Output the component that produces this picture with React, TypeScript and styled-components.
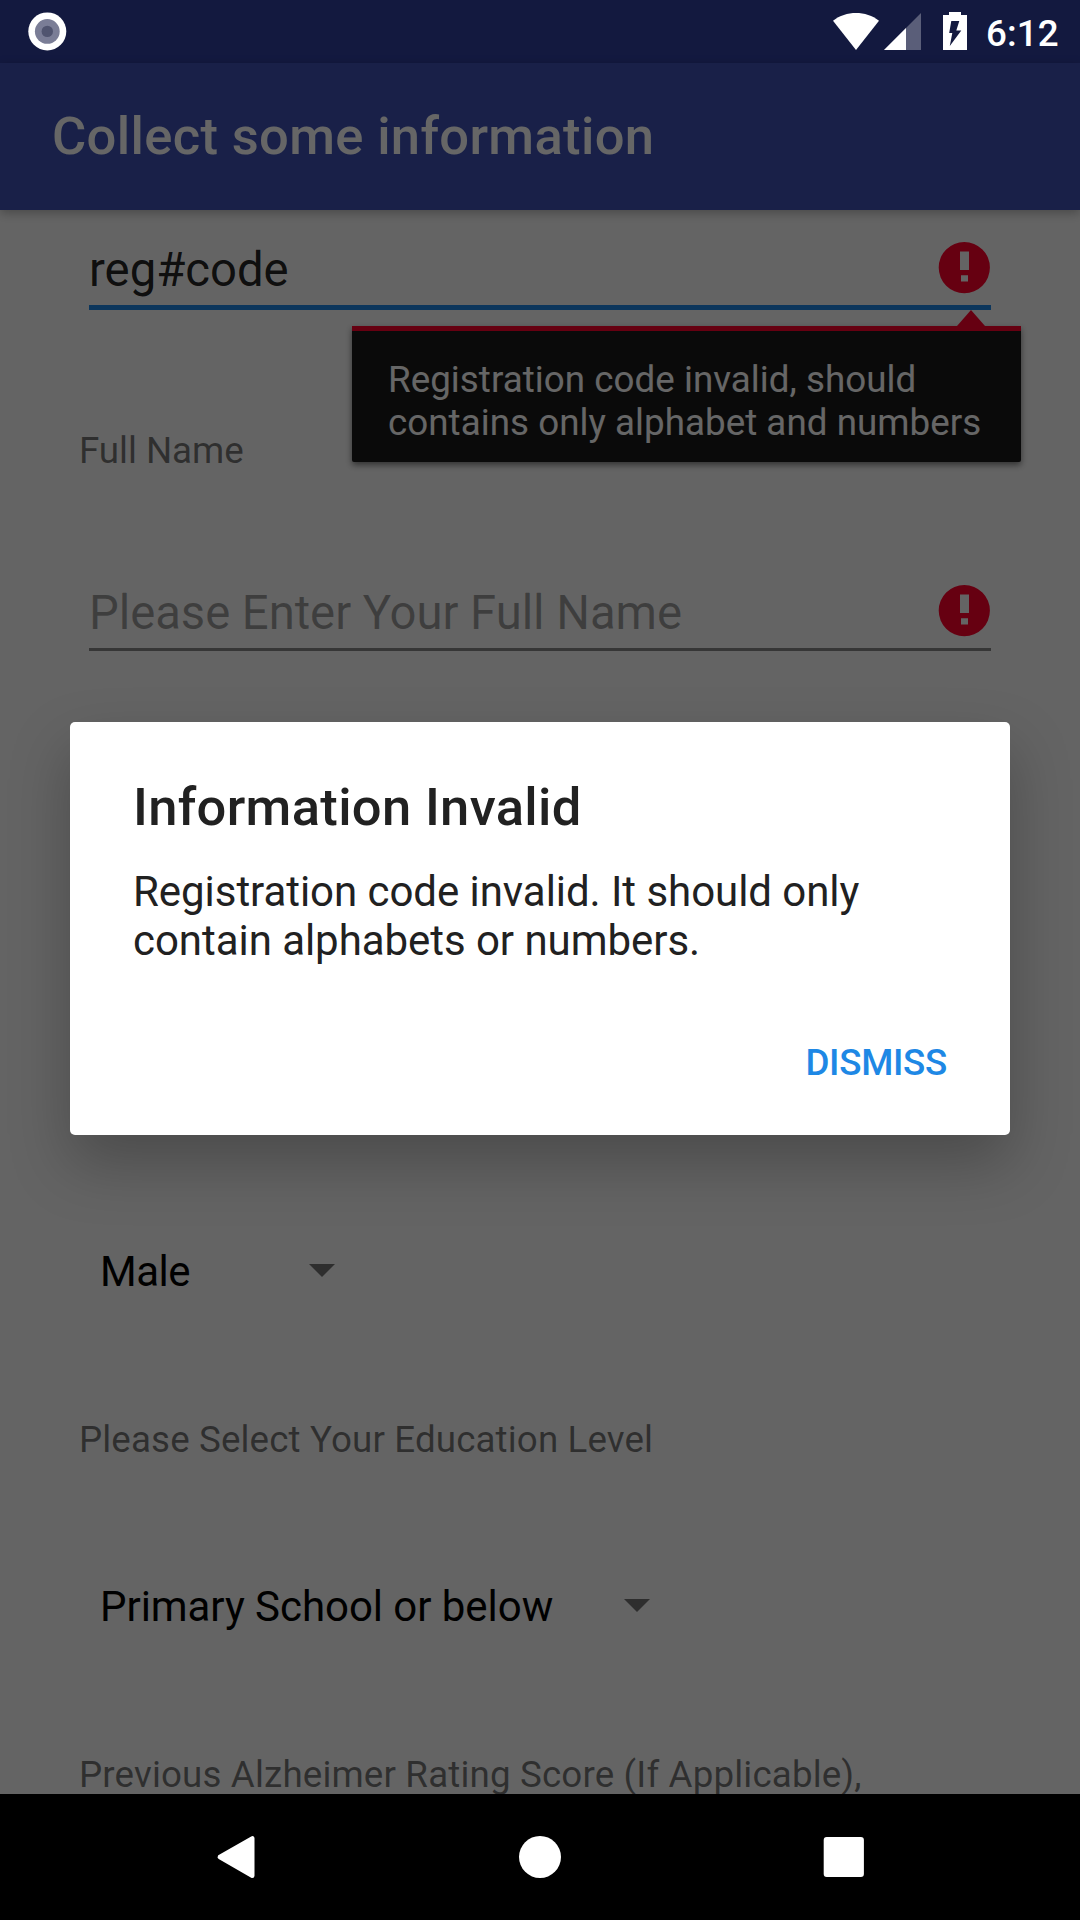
import React from "react";
import styled, { createGlobalStyle } from "styled-components";

const GlobalStyle = createGlobalStyle`
  * { box-sizing: border-box; }
  html, body { margin: 0; padding: 0; background: #000; }
  body { font-family: Roboto, "Noto Sans", sans-serif; }
  svg { display: block; flex: none; }
`;

const Screen = styled.div`
  position: relative;
  display: flex;
  flex-direction: column;
  width: 1080px;
  height: 1920px;
  overflow: hidden;
  background: #fafafa;
`;

const StatusBar = styled.header`
  flex: none;
  display: flex;
  justify-content: space-between;
  height: 63px;
  background: #303f9f;
`;

/* Status icons are drawn by the system, over the dialog scrim. */
const StatusGroup = styled.div`
  position: relative;
  z-index: 2;
  display: flex;
  align-items: flex-start;
`;

const Clock = styled.span`
  width: 96px;
  padding-left: 2px;
  font-size: 36.75px;
  font-weight: 500;
  line-height: 67px;
  letter-spacing: 0.1px;
  color: #fff;
`;

const AppBar = styled.div`
  position: relative;
  flex: none;
  display: flex;
  align-items: center;
  height: 147px;
  padding: 0 0 2px 52px;
  background: #3f51b5;
  box-shadow: 0 3px 10px rgba(0, 0, 0, 0.28);
`;

const AppTitle = styled.h1`
  margin: 0;
  font-size: 52.5px;
  font-weight: 500;
  line-height: 62px;
  letter-spacing: 0.35px;
  color: #fff;
`;

const Form = styled.main`
  flex: 1;
  min-height: 0;
  display: flex;
  flex-direction: column;
  padding: 32px 79px 0;
  overflow: hidden;
`;

const Field = styled.div<{ $active?: boolean; $gap?: number }>`
  flex: none;
  display: flex;
  align-items: flex-start;
  justify-content: space-between;
  height: ${(p) => (p.$active ? 68 : 66)}px;
  margin: ${(p) => p.$gap ?? 0}px 10px 0;
  padding-right: 1px;
  border-bottom: ${(p) =>
    p.$active ? "5px solid #1e88e5" : "3px solid rgba(0, 0, 0, 0.46)"};
`;

const FieldText = styled.span<{ $hint?: boolean }>`
  font-size: 47.25px;
  line-height: 56px;
  letter-spacing: ${(p) => (p.$hint ? "-0.05px" : "0")};
  white-space: nowrap;
  color: ${(p) => (p.$hint ? "rgba(0, 0, 0, 0.38)" : "rgba(0, 0, 0, 0.87)")};
`;

const Label = styled.label<{ $gap: number; $tracking?: number }>`
  flex: none;
  margin-top: ${(p) => p.$gap}px;
  font-size: 36.75px;
  line-height: 44px;
  letter-spacing: ${(p) => p.$tracking ?? 0}px;
  white-space: nowrap;
  color: rgba(0, 0, 0, 0.54);
`;

const Spinner = styled.div<{ $gap: number; $width: number; $tracking: number }>`
  flex: none;
  display: flex;
  align-items: center;
  justify-content: space-between;
  width: ${(p) => p.$width}px;
  height: 56px;
  margin: ${(p) => p.$gap}px 0 0 21px;
  font-size: 42px;
  line-height: 56px;
  letter-spacing: ${(p) => p.$tracking}px;
  white-space: nowrap;
  color: #000;
`;

const Caret = styled.i`
  margin-bottom: 3px;
  border: 13px solid transparent;
  border-top-color: rgba(0, 0, 0, 0.54);
  border-bottom: 0;
`;

const ErrorPopup = styled.div`
  position: absolute;
  top: 326px;
  left: 351.5px;
  width: 669px;
  height: 136px;
  padding: 27px 0 0 36.5px;
  border-top: 5px solid #ff002b;
  border-radius: 0 0 2px 2px;
  background: #191919;
  box-shadow: 0 3px 6px rgba(0, 0, 0, 0.5);
  font-size: 36.75px;
  line-height: 43px;
  letter-spacing: 0.035px;
  color: #fff;
  white-space: nowrap;

  &::before {
    content: "";
    position: absolute;
    top: -21px;
    left: 605px;
    border: 14px solid transparent;
    border-top: 0;
    border-bottom: 16px solid #ff002b;
  }
`;

const Scrim = styled.div`
  position: absolute;
  inset: 0;
  z-index: 1;
  display: flex;
  align-items: flex-start;
  justify-content: center;
  padding-top: 722px;
  background: rgba(0, 0, 0, 0.6);
`;

const Dialog = styled.section`
  display: flex;
  flex-direction: column;
  width: 940px;
  height: 413px;
  padding: 54px 63px 0;
  border-radius: 5px;
  background: #fff;
  box-shadow: 0 28px 60px rgba(0, 0, 0, 0.25);
  color: #212121;
`;

const DialogTitle = styled.h2`
  margin: 0;
  font-size: 52.5px;
  font-weight: 500;
  line-height: 62px;
  letter-spacing: 0.33px;
`;

const DialogBody = styled.p`
  margin: 29px 0 0;
  font-size: 42px;
  line-height: 49px;
  letter-spacing: -0.05px;
`;

const DismissButton = styled.button`
  align-self: flex-end;
  margin: 76px 0 0;
  padding: 0;
  border: 0;
  background: none;
  font: 500 36.75px/44px Roboto, sans-serif;
  letter-spacing: -0.3px;
  color: #1e88e5;
`;

const NavBar = styled.nav`
  position: relative;
  z-index: 2;
  flex: none;
  display: flex;
  align-items: center;
  justify-content: space-between;
  height: 126px;
  padding: 0 204px;
  background: #000;
`;

const ErrorIcon = () => (
  <svg width="52" height="52" viewBox="0 0 52 52">
    <path
      fill="#ff002b"
      fillRule="evenodd"
      d="M26.3 0a25.6 25.6 0 1 0 0 51.2a25.6 25.6 0 0 0 0-51.2zM22 9.5h9v18.5h-9zM23 33.2h7v6.3h-7z"
    />
  </svg>
);

const RecordIcon = () => (
  <svg width="90" height="63" viewBox="0 0 90 63">
    <circle cx="47.3" cy="31.4" r="19" fill="#fff" />
    <circle cx="47.3" cy="31.4" r="12.4" fill="#7a7d96" />
    <circle cx="47.3" cy="31.4" r="5.7" fill="#50546f" />
  </svg>
);

const SystemIcons = () => (
  <svg width="156" height="63" viewBox="828 0 156 63" fill="#fff">
    <path d="M833 20.8C846 10.5 866 10.5 879 20.8L856 50z" />
    <path d="M921 13V50H884z" opacity=".3" />
    <path d="M906 28V50H884z" />
    <path
      fillRule="evenodd"
      d="M949 12h12v3h6v35h-24V15h6zM951.3 21h8l-3 9.5h5L949.8 46l2.5-13h-3.1z"
    />
  </svg>
);

export default function App() {
  return (
    <>
      <GlobalStyle />
      <Screen>
        <StatusBar>
          <StatusGroup>
            <RecordIcon />
          </StatusGroup>
          <StatusGroup>
            <SystemIcons />
            <Clock>6:12</Clock>
          </StatusGroup>
        </StatusBar>
        <AppBar>
          <AppTitle>Collect some information</AppTitle>
        </AppBar>
        <Form>
          <Field $active>
            <FieldText>reg#code</FieldText>
            <ErrorIcon />
          </Field>
          <Label $gap={119} $tracking={-0.05}>
            Full Name
          </Label>
          <Field $gap={112}>
            <FieldText $hint>Please Enter Your Full Name</FieldText>
            <ErrorIcon />
          </Field>
          <Spinner $gap={593} $width={235} $tracking={-0.5}>
            Male
            <Caret />
          </Spinner>
          <Label $gap={118} $tracking={0.12}>
            Please Select Your Education Level
          </Label>
          <Spinner $gap={117} $width={550} $tracking={-0.05}>
            Primary School or below
            <Caret />
          </Spinner>
          <Label $gap={118} $tracking={0.14}>
            Previous Alzheimer Rating Score (If Applicable),
          </Label>
        </Form>
        <ErrorPopup>
          Registration code invalid, should
          <br />
          contains only alphabet and numbers
        </ErrorPopup>
        <Scrim>
          <Dialog role="dialog">
            <DialogTitle>Information Invalid</DialogTitle>
            <DialogBody>
              Registration code invalid. It should only
              <br />
              contain alphabets or numbers.
            </DialogBody>
            <DismissButton>DISMISS</DismissButton>
          </Dialog>
        </Scrim>
        <NavBar>
          <svg width="64" height="64" viewBox="204 1825 64 64">
            <path
              d="M219.8 1857L252.3 1838.3V1875.8z"
              fill="#fff"
              stroke="#fff"
              strokeWidth="4.4"
              strokeLinejoin="round"
            />
          </svg>
          <svg width="64" height="64" viewBox="0 0 64 64">
            <circle cx="32" cy="32" r="21" fill="#fff" />
          </svg>
          <svg width="64" height="64" viewBox="812 1825 64 64">
            <rect x="823.7" y="1837" width="40.2" height="40" rx="3" fill="#fff" />
          </svg>
        </NavBar>
      </Screen>
    </>
  );
}
